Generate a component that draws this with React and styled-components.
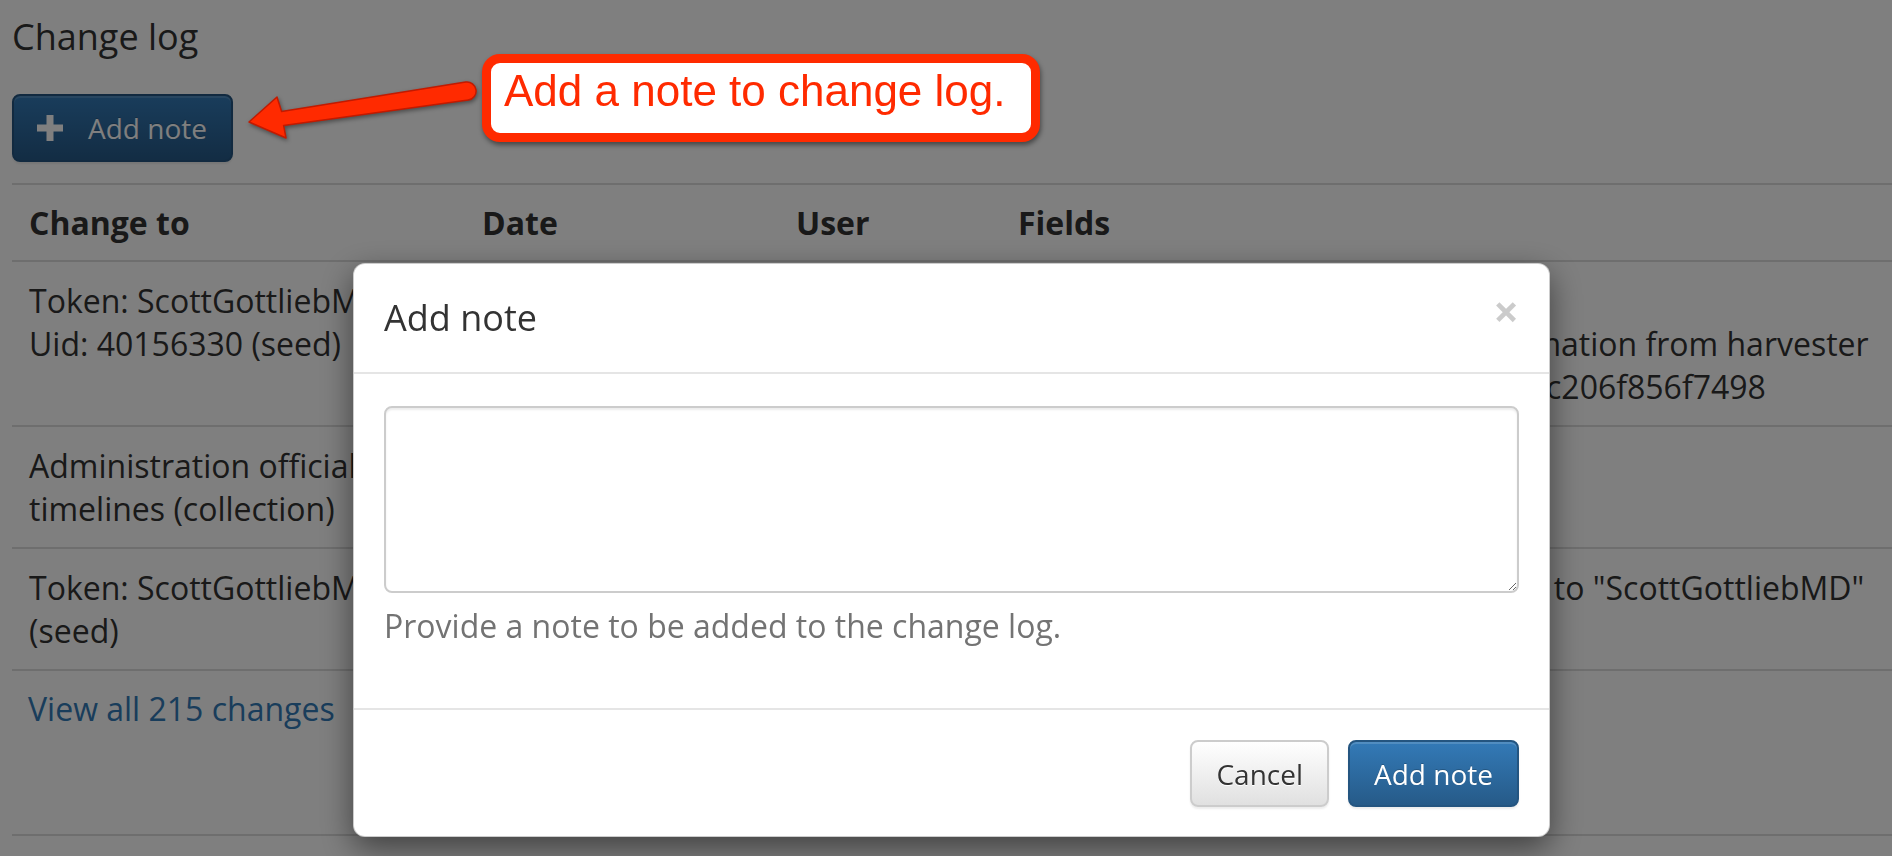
import React from "react";
import styled, { createGlobalStyle } from "styled-components";

const GlobalStyle = createGlobalStyle`
  html, body {
    margin: 0;
    padding: 0;
    background: #fff;
    overflow: hidden;
  }
  body {
    font-family: "Open Sans", "DejaVu Sans", sans-serif;
    font-size: 32px;
    line-height: 43px;
    color: #333;
  }
  * { box-sizing: border-box; }
`;

const rows = [
  {
    target: ["Token: ScottGottliebMD", "Uid: 40156330 (seed)"],
    date: "Feb. 20, 2018, 10:35 a.m.",
    user: "admin",
    fields: [
      'Uid: "40156330"',
      "Token and uid updated using information from harvester",
      "Harvest 2a8e6c5d40b3f91e7d0a5efc206f856f7498",
    ],
  },
  {
    target: ["Administration official timelines (collection)"],
    date: "Feb. 20, 2018, 10:31 a.m.",
    user: "admin",
    fields: ["Is on"],
  },
  {
    target: ["Token: ScottGottliebMD", "(seed)"],
    date: "Feb. 20, 2018, 10:30 a.m.",
    user: "admin",
    fields: ['Token changed from "scottgottlieb" to "ScottGottliebMD"'],
  },
];

const Page = styled.div`
  width: 1892px;
  padding: 16px 0 0 12px;
`;

const Heading = styled.h4`
  margin: 0 0 36px;
  font-size: 36px;
  font-weight: 400;
  line-height: 42px;
  color: #333;
`;

const Button = styled.button`
  display: inline-flex;
  align-items: center;
  gap: 25px;
  height: ${(p) => p.$height}px;
  padding: ${(p) => p.$pad};
  font-family: "Open Sans", sans-serif;
  font-size: 28px;
  line-height: 40px;
  border-radius: 8px;
  border: 2px solid ${(p) => (p.$primary ? "#245580" : "#ccc")};
  color: ${(p) => (p.$primary ? "#fff" : "#333")};
  background: ${(p) =>
    p.$primary
      ? "linear-gradient(to bottom, #337ab7 0%, #265a88 100%)"
      : "linear-gradient(to bottom, #fff 0%, #e0e0e0 100%)"};
  text-shadow: ${(p) =>
    p.$primary ? "0 -1px 0 rgba(0,0,0,.2)" : "0 1px 0 #fff"};
  box-shadow: inset 0 2px 0 rgba(255, 255, 255, 0.15),
    0 2px 2px rgba(0, 0, 0, 0.075);
  cursor: pointer;
`;

const PlusIcon = () => (
  <svg width="26" height="26" viewBox="0 0 26 26">
    <rect x="9.5" y="0" width="7" height="26" fill="currentColor" />
    <rect x="0" y="9.5" width="26" height="7" fill="currentColor" />
  </svg>
);

const LogTable = styled.table`
  width: 1880px;
  margin-top: 21px;
  table-layout: fixed;
  border-collapse: collapse;
  border-top: 2px solid #ddd;
`;

const Col = styled.col`
  width: ${(p) => p.$w}px;
`;

const Th = styled.th`
  padding: 16px 17px;
  text-align: left;
  font-weight: 700;
  white-space: nowrap;
  border-bottom: 2px solid #ddd;
`;

const Td = styled.td`
  padding: 17px;
  vertical-align: top;
  border-bottom: 2px solid #ddd;
  white-space: ${(p) => (p.$nowrap ? "nowrap" : "normal")};
`;

const ViewAll = styled.p`
  margin: 16px 0 0;
  padding-left: 16px;
  a {
    color: #337ab7;
    text-decoration: none;
  }
`;

const Rule = styled.div`
  margin-top: 104px;
  border-top: 2px solid #ddd;
`;

const Backdrop = styled.div`
  position: fixed;
  inset: 0;
  background: rgba(0, 0, 0, 0.5);
`;

const Modal = styled.div`
  position: fixed;
  left: 353px;
  top: 263px;
  width: 1197px;
  background: #fff;
  border: 1px solid rgba(0, 0, 0, 0.2);
  border-radius: 12px;
  box-shadow: 0 11px 32px rgba(0, 0, 0, 0.5);
`;

const ModalHeader = styled.div`
  display: flex;
  justify-content: space-between;
  align-items: flex-start;
  padding: 31px 30px 31px;
  border-bottom: 2px solid #e5e5e5;
`;

const ModalTitle = styled.h4`
  margin: 0;
  font-size: 36px;
  font-weight: 400;
  line-height: 46px;
  color: #333;
`;

const Close = styled.span`
  margin-top: -7px;
  font-size: 45px;
  font-weight: 700;
  line-height: 45px;
  color: #000;
  opacity: 0.2;
`;

const ModalBody = styled.div`
  padding: 32px 30px;
`;

const NoteInput = styled.textarea`
  display: block;
  width: 100%;
  height: 187px;
  padding: 13px 25px;
  font-family: "Open Sans", sans-serif;
  font-size: 30px;
  border: 2px solid #ccc;
  border-radius: 8px;
  box-shadow: inset 0 2px 2px rgba(0, 0, 0, 0.075);
  resize: vertical;
`;

const Help = styled.p`
  margin: 11px 0 29px;
  color: #737373;
`;

const ModalFooter = styled.div`
  display: flex;
  justify-content: flex-end;
  gap: 19px;
  padding: 30px 30px 29px;
  border-top: 2px solid #e5e5e5;
`;

const Callout = styled.div`
  position: absolute;
  left: 482px;
  top: 54px;
  width: 558px;
  padding: 6px 0 20px 13px;
  border: 9px solid #ff2a00;
  border-radius: 18px;
  background: #fff;
  box-shadow: 1px 3px 5px rgba(0, 0, 0, 0.45);
  font-family: "Liberation Sans", Arial, sans-serif;
  font-size: 44px;
  line-height: 44px;
  color: #ff2a00;
  white-space: nowrap;
`;

const ArrowSvg = styled.svg`
  position: absolute;
  left: 0;
  top: 0;
  overflow: visible;
  pointer-events: none;
  filter: drop-shadow(1px 2px 2px rgba(0, 0, 0, 0.4));
`;

const Arrow = () => (
  <ArrowSvg width="500" height="200" viewBox="0 0 500 200">
    <path
      d="M249 122 L277 97 L281.6 111.6 L465.7 82.1 A9 9 0 0 1 468.3 100.1 L283.6 125.4 L286 138 Z"
      fill="#ff2a00"
      stroke="#c21a00"
      strokeWidth="1.5"
      strokeLinejoin="round"
    />
  </ArrowSvg>
);

export default function App() {
  return (
    <>
      <GlobalStyle />
      <Page>
        <Heading>Change log</Heading>
        <Button $primary $height={68} $pad="0 24px 0 23px">
          <PlusIcon />
          Add note
        </Button>
        <LogTable>
          <colgroup>
            <Col $w={453} />
            <Col $w={314} />
            <Col $w={222} />
            <Col $w={891} />
          </colgroup>
          <thead>
            <tr>
              <Th>Change to</Th>
              <Th>Date</Th>
              <Th>User</Th>
              <Th>Fields</Th>
            </tr>
          </thead>
          <tbody>
            {rows.map((row, i) => (
              <tr key={i}>
                <Td>
                  {row.target.map((line, j) => (
                    <div key={j}>{line}</div>
                  ))}
                </Td>
                <Td>{row.date}</Td>
                <Td>{row.user}</Td>
                <Td $nowrap>
                  {row.fields.map((line, j) => (
                    <div key={j}>{line}</div>
                  ))}
                </Td>
              </tr>
            ))}
          </tbody>
        </LogTable>
        <ViewAll>
          <a href="#">View all 215 changes</a>
        </ViewAll>
        <Rule />
      </Page>

      <Backdrop />
      <Arrow />
      <Callout>Add a note to change log.</Callout>

      <Modal>
        <ModalHeader>
          <ModalTitle>Add note</ModalTitle>
          <Close>×</Close>
        </ModalHeader>
        <ModalBody>
          <NoteInput />
          <Help>Provide a note to be added to the change log.</Help>
        </ModalBody>
        <ModalFooter>
          <Button $height={67} $pad="0 24px">
            Cancel
          </Button>
          <Button $primary $height={67} $pad="0 24px">
            Add note
          </Button>
        </ModalFooter>
      </Modal>
    </>
  );
}
